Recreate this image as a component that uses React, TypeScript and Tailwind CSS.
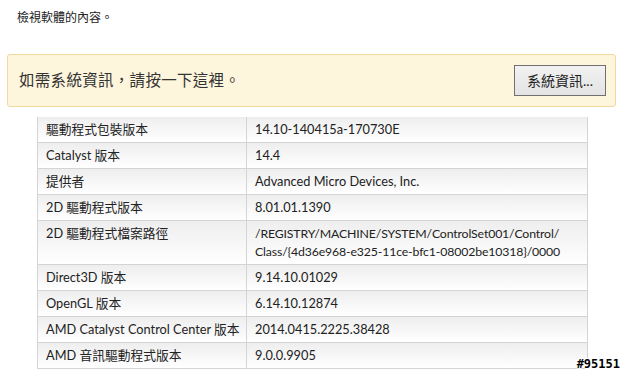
import React from "react";

const rows: [string, string[]][] = [
  ["驅動程式包裝版本", ["14.10-140415a-170730E"]],
  ["Catalyst 版本", ["14.4"]],
  ["提供者", ["Advanced Micro Devices, Inc."]],
  ["2D 驅動程式版本", ["8.01.01.1390"]],
  ["2D 驅動程式檔案路徑", ["/REGISTRY/MACHINE/SYSTEM/ControlSet001/Control/", "Class/{4d36e968-e325-11ce-bfc1-08002be10318}/0000"]],
  ["Direct3D 版本", ["9.14.10.01029"]],
  ["OpenGL 版本", ["6.14.10.12874"]],
  ["AMD Catalyst Control Center 版本", ["2014.0415.2225.38428"]],
  ["AMD 音訊驅動程式版本", ["9.0.0.9905"]],
];

const font = { fontFamily: '"Lato", "Noto Sans CJK TC", sans-serif' };

export default function App() {
  return (
    <div className="relative w-[623px] h-[376px] bg-white overflow-hidden text-[#222]" style={font}>
      <div className="pl-[17px] pt-[10px] h-[54px] text-[12px] leading-[16px]">檢視軟體的內容。</div>
      <div className="mx-[7px] h-[53px] rounded-[3px] border border-[#f3d9a0] bg-[#fdf5dc] flex items-center justify-between pl-[11px] pr-[9px]">
        <div className="text-[15.5px] tracking-[0.3px] text-[#333]">如需系統資訊，請按一下這裡。</div>
        <button className="w-[92px] h-[31px] border border-[#707070] bg-gradient-to-b from-[#f2f2f2] to-[#e3e3e3] text-[14px] text-[#222]">系統資訊...</button>
      </div>
      <div className="ml-[37px] mt-[10px] w-[551px] border-l border-r border-[#d4d4d4]">
        {rows.map(([k, v], i) => (
          <div key={i} className={`flex border-b border-[#d4d4d4] text-[12.75px] leading-[17px] ${v.length > 1 ? "h-[44px]" : "h-[26px]"}`}>
            <div className="w-[209px] shrink-0 whitespace-nowrap border-r border-[#d4d4d4] bg-gradient-to-b from-[#eeeeee] to-white px-[8px] pt-[4px]">{k}</div>
            <div className="flex-1 whitespace-nowrap bg-gradient-to-b from-[#eeeeee] to-white px-[8px] pt-[4px]">
              {v.map((l, j) => (
                <div key={j} className={v.length > 1 ? "leading-[18px] text-[12.3px] tracking-[-0.15px]" : ""}>{l}</div>
              ))}
            </div>
          </div>
        ))}
      </div>
      <div
        className="absolute right-[3px] bottom-[6px] text-[12px] font-bold text-black leading-none"
        style={{ fontFamily: '"DejaVu Sans Mono", monospace', textShadow: "1px 0 #fff, -1px 0 #fff, 0 1px #fff, 0 -1px #fff" }}
      >
        #95151
      </div>
    </div>
  );
}
